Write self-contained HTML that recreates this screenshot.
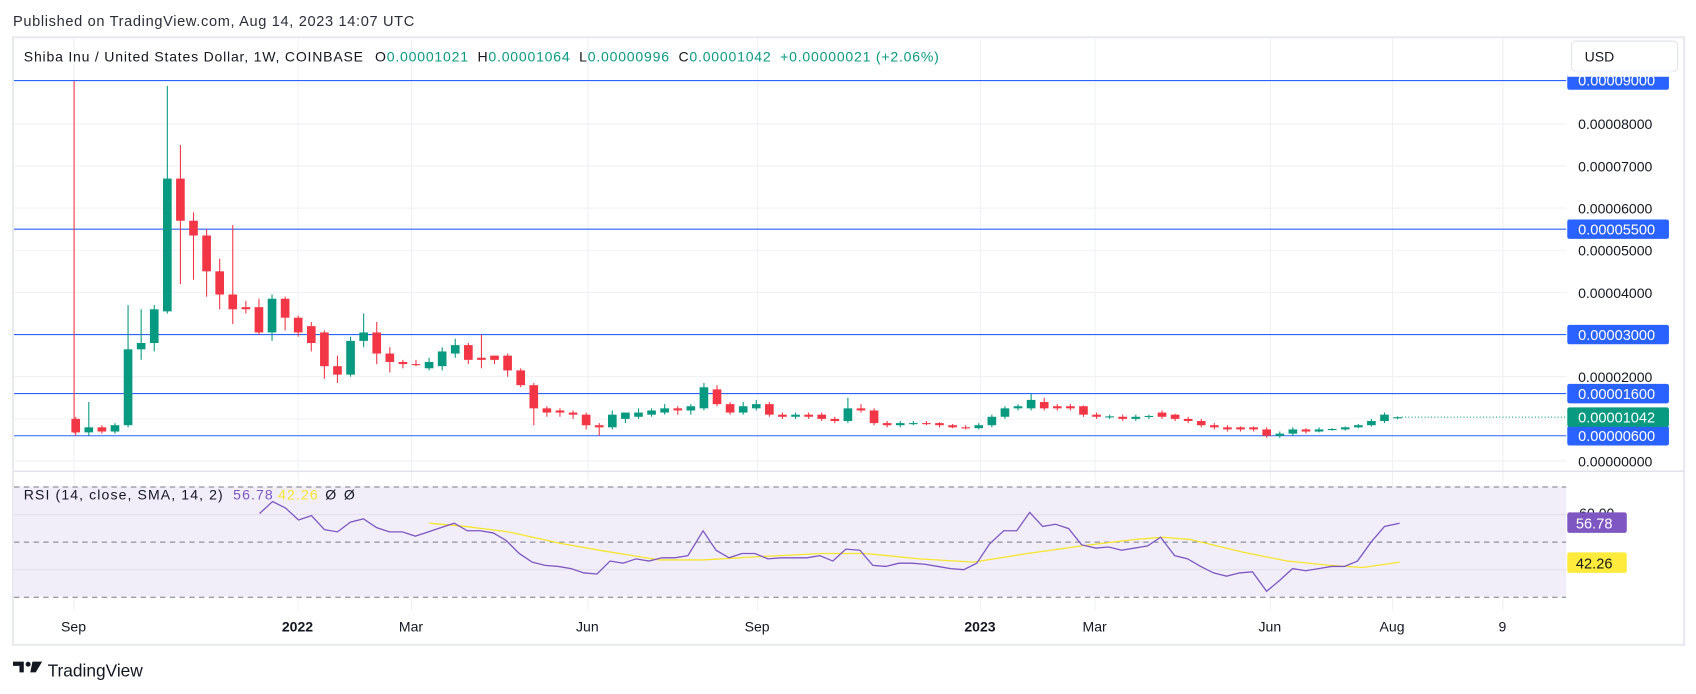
<!DOCTYPE html>
<html><head><meta charset="utf-8"><style>
html,body{margin:0;padding:0;background:#fff;overflow:hidden}
svg{display:block;font-family:"Liberation Sans",sans-serif}
</style></head><body>
<svg id="s" width="1696" height="694" viewBox="0 0 1568 642" preserveAspectRatio="none" xmlns="http://www.w3.org/2000/svg">
<rect width="1568" height="642" fill="#fff"/>
<text x="12" y="24" font-size="13.5" fill="#2a2e39" textLength="371" lengthAdjust="spacing">Published on TradingView.com, Aug 14, 2023 14:07 UTC</text>
<rect x="12" y="34.5" width="1545" height="562" fill="#fff" stroke="#e8eaf0" stroke-width="2"/>
<g id="grid"></g>
<rect x="13" y="450" width="1435" height="102" fill="#f1eefa"/>
<g stroke="#e3e0ec" stroke-width="1"><line x1="13" x2="1448" y1="476" y2="476"/><line x1="13" x2="1448" y1="527" y2="527"/></g>
<g stroke="#787b86" stroke-width="1" stroke-dasharray="5,4"><line x1="13" x2="1448" y1="450.5" y2="450.5"/><line x1="13" x2="1448" y1="501.5" y2="501.5"/><line x1="13" x2="1448" y1="552.5" y2="552.5"/></g>
<line x1="12" x2="1557" y1="436" y2="436" stroke="#e0e3eb" stroke-width="1.5"/>
<g id="hl"></g>
<line x1="68.5" x2="68.5" y1="75" y2="401" stroke="#f23645" stroke-width="1"/>
<g id="candles"></g>
<g id="rsi"></g>
<text x="22" y="57" font-size="13" fill="#131722" textLength="846" lengthAdjust="spacing">Shiba Inu / United States Dollar, 1W, COINBASE <tspan dx="6">O</tspan><tspan fill="#089981">0.00001021</tspan><tspan dx="8">H</tspan><tspan fill="#089981">0.00001064</tspan><tspan dx="8">L</tspan><tspan fill="#089981">0.00000996</tspan><tspan dx="8">C</tspan><tspan fill="#089981">0.00001042</tspan><tspan dx="8" fill="#089981">+0.00000021 (+2.06%)</tspan></text>
<rect x="1453" y="38" width="98" height="28" rx="4" fill="#fff" stroke="#e0e3eb"/>
<text x="1465" y="57" font-size="13" fill="#131722">USD</text>
<g id="axis" font-size="13" fill="#131722"></g>
<text x="22" y="462" font-size="13" fill="#131722" textLength="306" lengthAdjust="spacing">RSI (14, close, SMA, 14, 2) <tspan dx="4" fill="#7e57c2">56.78</tspan><tspan dx="4" fill="#f7e52a">42.26</tspan><tspan dx="6">Ø</tspan><tspan dx="6">Ø</tspan></text>
<text x="1460" y="479" font-size="13" fill="#131722">60.00</text>
<rect x="1449" y="474" width="55" height="19" rx="2" fill="#7e57c2"/>
<text x="1457" y="489" font-size="13.5" fill="#fff">56.78</text>
<rect x="1449" y="511" width="55" height="19" rx="2" fill="#ffeb3b"/>
<text x="1457" y="526" font-size="13.5" fill="#131722">42.26</text>
<g font-size="13" fill="#131722" text-anchor="middle">
<text x="68" y="584">Sep</text><text x="275" y="584" font-weight="bold">2022</text><text x="380" y="584">Mar</text><text x="543" y="584">Jun</text><text x="700" y="584">Sep</text><text x="906" y="584" font-weight="bold">2023</text><text x="1012" y="584">Mar</text><text x="1174" y="584">Jun</text><text x="1287" y="584">Aug</text><text x="1389" y="584">9</text>
</g>
<g fill="#131722"><path d="M12 612h10v10h-4v-6h-6z"/><circle cx="26" cy="614.5" r="2.3"/><path d="M30 612h9l-6 10h-5z"/></g>
<text x="44" y="626" font-size="16" fill="#131722">TradingView</text>
</svg>
<script>
const NS="http://www.w3.org/2000/svg";
function el(p,t,a){const e=document.createElementNS(NS,t);for(const k in a)e.setAttribute(k,a[k]);document.getElementById(p).appendChild(e);return e;}
const Y=p=>426.5-39*p;
[68,275,380,543,700,906,1012,1174,1287,1389].forEach(x=>el("grid","line",{x1:x+.5,x2:x+.5,y1:35,y2:565,stroke:"#f0f1f5"}));
for(let p=0;p<=8;p++)el("grid","line",{x1:13,x2:1448,y1:Y(p),y2:Y(p),stroke:"#f0f1f5"});
[8,7,6,5,4,2,0].forEach(p=>{const t=el("axis","text",{x:1459,y:Y(p)+5});t.textContent="0.0000"+p+"000";});
[[9,"0.00009000"],[5.5,"0.00005500"],[3,"0.00003000"],[1.6,"0.00001600"],[0.6,"0.00000600"]].forEach(([p,s])=>{
 const y=p==9?74.5:Y(p);
 el("hl","line",{x1:13,x2:1448,y1:y,y2:y,stroke:"#2962ff","stroke-width":1});
 if(p==9){el("axis","rect",{x:1449,y:67,width:94,height:16,rx:2,fill:"#2962ff"});
  const t=el("axis","text",{x:1459,y:79,fill:"#fff","font-size":13.5});t.textContent=s;return;}
 el("axis","rect",{x:1449,y:y-9,width:94,height:18,rx:2,fill:"#2962ff"});
 const t=el("axis","text",{x:1459,y:y+5,fill:"#fff","font-size":13.5});t.textContent=s;});
el("axis","rect",{x:1449,y:66,width:98,height:5,fill:"#fff"});
el("axis","line",{x1:1449,x2:1557,y1:66,y2:66,stroke:"#fff","stroke-width":0});
const cy=Y(1.042);
el("hl","line",{x1:1296,x2:1448,y1:cy,y2:cy,stroke:"#089981","stroke-dasharray":"1,2"});
el("axis","rect",{x:1449,y:cy-9,width:94,height:18,rx:2,fill:"#089981"});
{const t=el("axis","text",{x:1459,y:cy+5,fill:"#fff","font-size":13.5});t.textContent="0.00001042";}
const D=[[1.0,1.05,.6,.68],[.68,1.4,.6,.8],[.8,.85,.65,.7],[.7,.9,.65,.85],[.85,3.7,.8,2.65],[2.65,3.6,2.4,2.8],[2.8,3.7,2.6,3.6],[3.55,8.9,3.5,6.7],[6.7,7.5,4.2,5.7],[5.7,5.9,4.3,5.35],[5.35,5.5,3.9,4.5],[4.5,4.8,3.6,3.95],[3.95,5.6,3.25,3.6],[3.65,3.8,3.5,3.6],[3.65,3.85,3.0,3.05],[3.05,3.95,2.85,3.85],[3.85,3.9,3.1,3.4],[3.4,3.45,2.95,3.05],[3.2,3.3,2.6,2.8],[3.05,3.1,1.95,2.25],[2.25,2.5,1.85,2.05],[2.05,2.95,2.0,2.85],[2.85,3.5,2.7,3.05],[3.05,3.3,2.3,2.55],[2.55,2.7,2.1,2.35],[2.35,2.4,2.2,2.3],[2.3,2.4,2.25,2.28],[2.2,2.45,2.15,2.35],[2.25,2.7,2.15,2.6],[2.55,2.9,2.45,2.75],[2.75,2.8,2.3,2.4],[2.45,3.0,2.2,2.4],[2.5,2.5,2.3,2.4],[2.5,2.55,2.0,2.15],[2.15,2.2,1.75,1.8],[1.8,1.85,.85,1.25],[1.25,1.3,1.05,1.15],[1.2,1.25,1.05,1.15],[1.15,1.2,1.0,1.1],[1.1,1.15,.75,.85],[.85,.9,.6,.8],[.8,1.2,.75,1.1],[1.0,1.15,.9,1.15],[1.05,1.25,1.0,1.15],[1.1,1.25,1.05,1.2],[1.15,1.35,1.1,1.25],[1.25,1.3,1.1,1.2],[1.2,1.35,1.1,1.3],[1.25,1.85,1.2,1.75],[1.7,1.8,1.3,1.35],[1.35,1.4,1.1,1.15],[1.15,1.4,1.1,1.3],[1.25,1.45,1.2,1.35],[1.35,1.4,1.05,1.1],[1.1,1.15,1.0,1.05],[1.05,1.15,1.0,1.1],[1.1,1.15,1.0,1.05],[1.1,1.15,.95,1.0],[1.0,1.05,.9,.95],[.95,1.5,.9,1.25],[1.25,1.35,1.15,1.2],[1.2,1.25,.85,.9],[.9,.95,.8,.85],[.85,.95,.8,.9],[.9,.95,.85,.9],[.9,.95,.85,.88],[.9,.92,.8,.85],[.85,.88,.78,.8],[.8,.85,.75,.78],[.78,.9,.75,.85],[.85,1.1,.8,1.05],[1.05,1.3,1.0,1.25],[1.25,1.35,1.2,1.3],[1.25,1.6,1.2,1.45],[1.4,1.5,1.2,1.25],[1.3,1.35,1.2,1.25],[1.3,1.35,1.2,1.25],[1.3,1.32,1.05,1.1],[1.1,1.15,1.0,1.05],[1.05,1.1,1.0,1.06],[1.05,1.1,.95,1.0],[1.0,1.1,.95,1.05],[1.05,1.1,1.0,1.07],[1.15,1.2,1.0,1.05],[1.1,1.12,.95,1.0],[1.0,1.05,.9,.95],[.95,1.0,.8,.85],[.85,.9,.75,.8],[.8,.85,.7,.75],[.8,.82,.7,.75],[.8,.82,.7,.75],[.75,.8,.55,.6],[.6,.7,.55,.65],[.65,.8,.6,.75],[.75,.78,.65,.7],[.7,.8,.68,.75],[.75,.78,.72,.76],[.75,.82,.72,.8],[.8,.88,.78,.85],[.85,1.0,.82,.95],[.95,1.15,.9,1.1],[1.02,1.06,.99,1.04]];
D.forEach((d,i)=>{const x=70+i*12.1,[o,h,l,c]=d,col=c>=o?"#089981":"#f23645";
 el("candles","line",{x1:x,x2:x,y1:Y(h),y2:Y(l),stroke:col,"stroke-width":1});
 const t=Y(Math.max(o,c)),b=Y(Math.min(o,c));
 el("candles","rect",{x:x-4,y:t,width:8,height:Math.max(b-t,1),fill:col});});
const R="240,475 252,464 264,470 276,481 288,477 300,490 312,492 324,483 336,480 348,488 360,492 372,492 384,496 396,492 408,488 420,484 432,491 444,491 456,493 468,500 480,512 492,520 504,523 516,524 528,526 540,530 552,531 564,519 576,521 588,517 600,519 612,516 624,516 636,514 650,491 662,509 674,516 686,512 698,512 710,517 722,516 734,516 746,516 758,514 770,519 782,508 795,509 807,523 819,524 831,521 843,521 855,522 867,524 879,526 891,527 903,521 915,503 928,491 940,491 952,474 964,487 976,485 988,489 1000,504 1013,507 1025,506 1037,509 1049,507 1061,505 1073,497 1086,514 1098,517 1110,524 1122,530 1134,533 1146,530 1158,529 1171,547 1183,537 1195,526 1207,528 1219,526 1231,524 1243,524 1255,519 1268,501 1280,487 1294,484";
const S="397,484 430,487 470,492 520,503 560,510 610,518 650,518 700,515 760,512 800,512 850,517 900,520 950,512 1000,505 1050,499 1075,497 1100,499 1150,511 1190,519 1230,523 1260,525 1294,520";
el("rsi","polyline",{points:S,fill:"none",stroke:"#f7e52a","stroke-width":1.2});
el("rsi","polyline",{points:R,fill:"none",stroke:"#7e57c2","stroke-width":1.2});
</script>
</body></html>
